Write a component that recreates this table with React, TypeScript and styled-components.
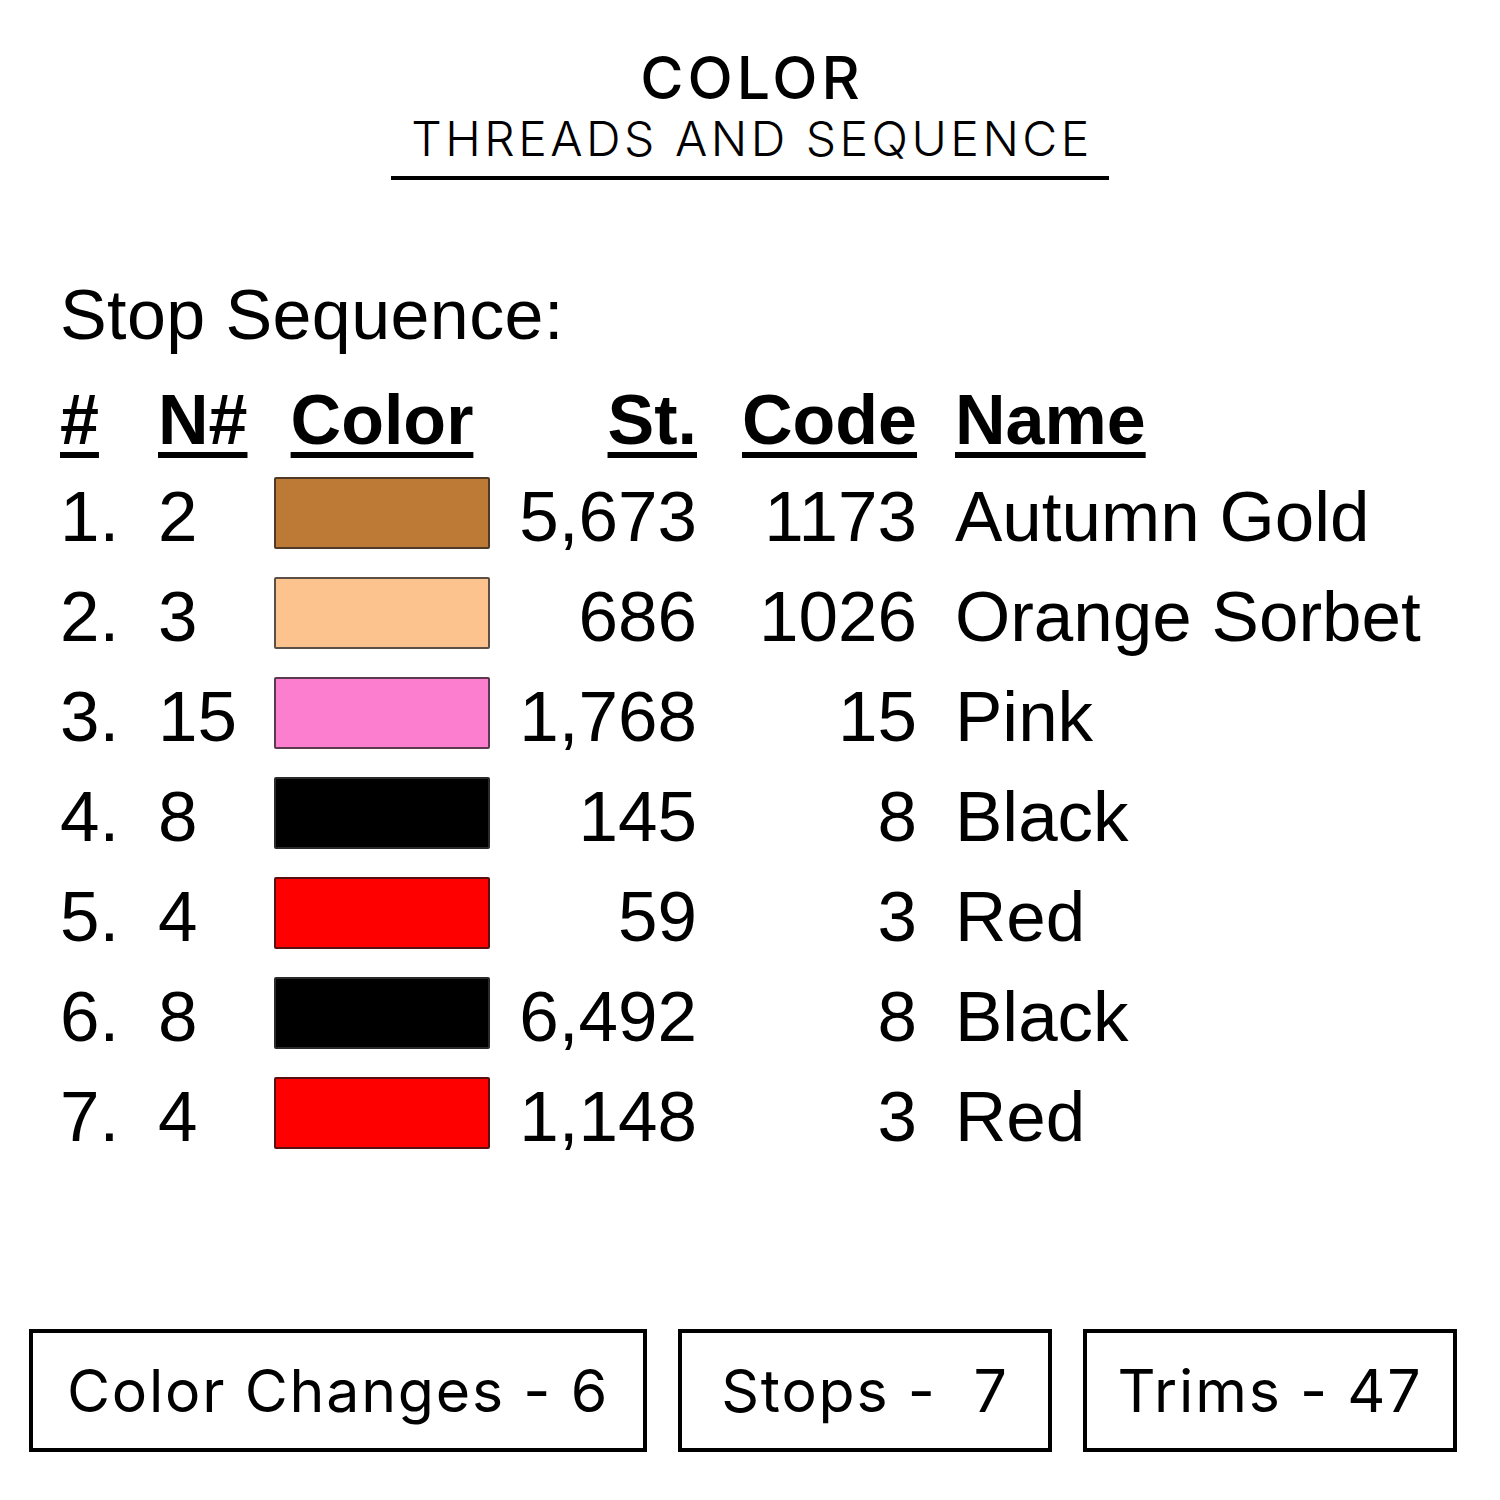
import React from 'react';
import styled, { createGlobalStyle } from 'styled-components';

const GlobalStyle = createGlobalStyle`
  html, body {
    margin: 0;
    padding: 0;
    background: #ffffff;
  }
`;

type Stop = {
  no: number;
  needle: number;
  color: string;
  border: string;
  stitches: string;
  code: string;
  name: string;
};

const stops: Stop[] = [
  { no: 1, needle: 2, color: '#bd7a37', border: '#4e3a26', stitches: '5,673', code: '1173', name: 'Autumn Gold' },
  { no: 2, needle: 3, color: '#fcc38f', border: '#5c5046', stitches: '686', code: '1026', name: 'Orange Sorbet' },
  { no: 3, needle: 15, color: '#fc7fcf', border: '#5a3a4c', stitches: '1,768', code: '15', name: 'Pink' },
  { no: 4, needle: 8, color: '#000000', border: '#2a2a2a', stitches: '145', code: '8', name: 'Black' },
  { no: 5, needle: 4, color: '#fe0000', border: '#5a1010', stitches: '59', code: '3', name: 'Red' },
  { no: 6, needle: 8, color: '#000000', border: '#2a2a2a', stitches: '6,492', code: '8', name: 'Black' },
  { no: 7, needle: 4, color: '#fe0000', border: '#5a1010', stitches: '1,148', code: '3', name: 'Red' },
];

const App = () => {
  return (
    <Page>
      <GlobalStyle />
      <Header>
        <Title>COLOR</Title>
        <Subtitle>THREADS AND SEQUENCE</Subtitle>
      </Header>

      <Sequence>
        <SectionLabel>Stop Sequence:</SectionLabel>
        <Table>
          <HeadCell>#</HeadCell>
          <HeadCell>N#</HeadCell>
          <HeadCell $align="center">Color</HeadCell>
          <HeadCell $align="right">St.</HeadCell>
          <HeadCell $align="right">Code</HeadCell>
          <HeadCell $name>Name</HeadCell>

          {stops.map((s) => (
            <React.Fragment key={s.no}>
              <Cell>{s.no}.</Cell>
              <Cell>{s.needle}</Cell>
              <SwatchCell>
                <Swatch $fill={s.color} $edge={s.border} />
              </SwatchCell>
              <Cell $align="right">{s.stitches}</Cell>
              <Cell $align="right">{s.code}</Cell>
              <Cell $name>{s.name}</Cell>
            </React.Fragment>
          ))}
        </Table>
      </Sequence>

      <Stats>
        <StatBox $w={618}>Color Changes - 6</StatBox>
        <StatBox $w={374}>Stops -  7</StatBox>
        <StatBox $w={374}>Trims - 47</StatBox>
      </Stats>
    </Page>
  );
};

export default App;

const Page = styled.div`
  width: 1500px;
  height: 1500px;
  display: flex;
  flex-direction: column;
  background: #ffffff;
  color: #000000;
  overflow: hidden;
`;

const Header = styled.header`
  display: flex;
  flex-direction: column;
  align-items: center;
  padding-top: 46px;
`;

const Title = styled.h1`
  margin: 0;
  font-family: Inter, 'Noto Sans', sans-serif;
  font-weight: 500;
  font-size: 59px;
  line-height: 64px;
  letter-spacing: 4px;
  padding-left: 4px;
`;

const Subtitle = styled.h2`
  margin: 0;
  padding: 0 16px 8px 20px;
  font-family: Inter, 'Noto Sans', sans-serif;
  font-weight: 300;
  font-size: 48px;
  line-height: 58px;
  letter-spacing: 3.5px;
  border-bottom: 4px solid #000000;
`;

const Sequence = styled.section`
  display: flex;
  flex-direction: column;
  padding: 85px 0 0 60px;
  font-family: 'Liberation Sans', Arial, sans-serif;
`;

const SectionLabel = styled.div`
  font-size: 70px;
  line-height: 100px;
  margin-bottom: 8px;
  letter-spacing: 0.4px;
`;

const Table = styled.div`
  display: grid;
  grid-template-columns: 98px 116px 216px 207px 220px 1fr;
  grid-auto-rows: 100px;
  grid-template-rows: 94px;
  font-size: 71px;
`;

const Cell = styled.div<{ $align?: 'left' | 'right' | 'center'; $name?: boolean }>`
  line-height: 100px;
  white-space: nowrap;
  text-align: ${(p) => p.$align || 'left'};
  padding-left: ${(p) => (p.$name ? '38px' : '0')};
`;

const HeadCell = styled(Cell)`
  font-size: 70px;
  font-weight: 700;
  line-height: 94px;
  text-decoration: underline;
  text-decoration-thickness: 6px;
  text-underline-offset: 8px;
`;

const SwatchCell = styled.div`
  padding-top: 10px;
`;

const Swatch = styled.div<{ $fill: string; $edge: string }>`
  box-sizing: border-box;
  width: 216px;
  height: 72px;
  background: ${(p) => p.$fill};
  border: 2px solid ${(p) => p.$edge};
  border-radius: 2px;
`;

const Stats = styled.div`
  display: flex;
  gap: 31px;
  margin-top: auto;
  margin-bottom: 48px;
  padding-left: 29px;
`;

const StatBox = styled.div<{ $w: number }>`
  box-sizing: border-box;
  width: ${(p) => p.$w}px;
  height: 123px;
  display: flex;
  align-items: center;
  justify-content: center;
  border: 4px solid #000000;
  font-family: Inter, 'Noto Sans', sans-serif;
  font-weight: 400;
  font-size: 59px;
  letter-spacing: 1.8px;
  white-space: pre;
`;
